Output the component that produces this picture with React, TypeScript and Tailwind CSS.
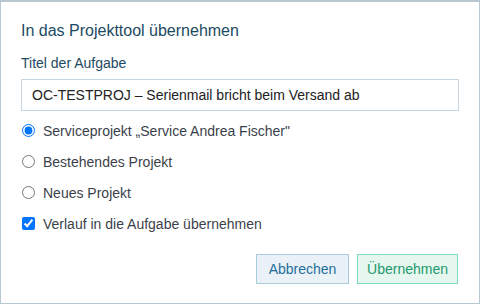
import { useState } from 'react'

const options = [
  { id: 'service', label: 'Serviceprojekt „Service Andrea Fischer"' },
  { id: 'existing', label: 'Bestehendes Projekt' },
  { id: 'new', label: 'Neues Projekt' },
]

export default function App() {
  const [choice, setChoice] = useState('service')
  const [history, setHistory] = useState(true)
  const [title, setTitle] = useState('OC-TESTPROJ – Serienmail bricht beim Versand ab')

  return (
    <div
      className="w-[480px] h-[304px] bg-white border border-t-2 border-[#b9c7d1] px-[20px] pt-[19px]"
      style={{ fontFamily: '"Liberation Sans", Arial, sans-serif' }}
    >
      <h2 className="text-[16px] leading-[20px] text-[#1d4a63]">In das Projekttool übernehmen</h2>

      <label className="block mt-[14px] text-[14px] leading-[17px] text-[#1d4a63]">Titel der Aufgabe</label>
      <input
        value={title}
        onChange={(e) => setTitle(e.target.value)}
        className="mt-[7px] block w-[438px] h-[32px] border border-[#c9d5de] px-[10px] text-[14px] text-[#222] outline-none"
      />

      <div className="mt-[5px]">
        {options.map((o) => (
          <label key={o.id} className="flex items-center h-[31px] text-[14px] text-[#3b3f4a]">
            <input
              type="radio"
              name="target"
              checked={choice === o.id}
              onChange={() => setChoice(o.id)}
              className="m-0 ml-[1px] mr-[8px] w-[13px] h-[13px] relative top-[-1px] shrink-0"
            />
            <span className="whitespace-nowrap">{o.label}</span>
          </label>
        ))}
        <label className="flex items-center h-[31px] text-[14px] text-[#3b3f4a]">
          <input
            type="checkbox"
            checked={history}
            onChange={(e) => setHistory(e.target.checked)}
            className="m-0 ml-[1px] mr-[8px] w-[13px] h-[13px] relative top-[-1px] shrink-0"
          />
          <span>Verlauf in die Aufgabe übernehmen</span>
        </label>
      </div>

      <div className="flex justify-end gap-[8px] mt-[14px] mr-[1px]">
        <button className="w-[93px] h-[30px] bg-[#ebf2f7] border border-[#a9cbdc] text-[14px] text-[#1f6e9a]">
          Abbrechen
        </button>
        <button className="w-[101px] h-[30px] bg-[#e6f7f0] border border-[#7ddcb8] text-[14px] text-[#1e9a6a]">
          Übernehmen
        </button>
      </div>
    </div>
  )
}
